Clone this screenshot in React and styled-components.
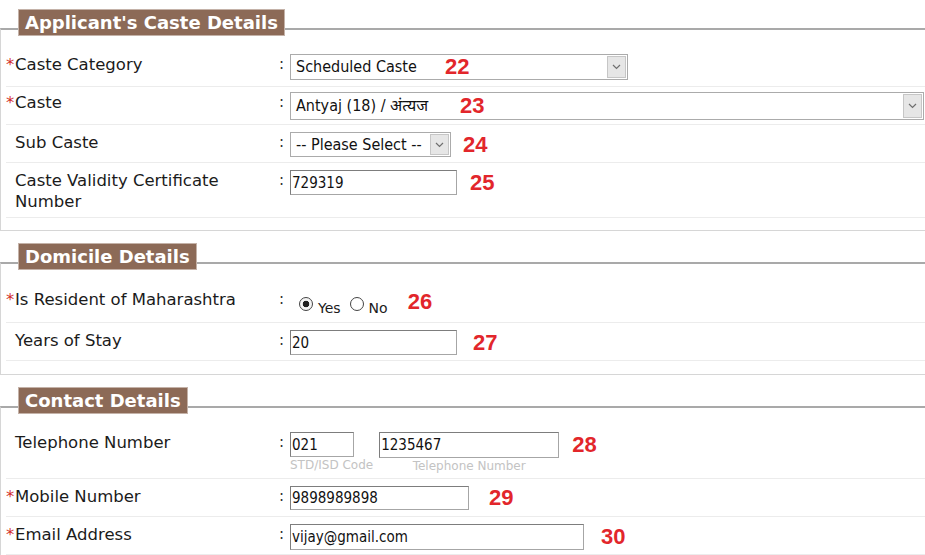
import styled, { createGlobalStyle } from "styled-components";

const GlobalStyle = createGlobalStyle`
  html, body {
    margin: 0;
    padding: 0;
    background: #fff;
  }
  body {
    font-family: "DejaVu Sans", Verdana, sans-serif;
    color: #1b1b1b;
    overflow: hidden;
  }
`;

const FIELD_FONT = `"DejaVu Sans Condensed", "Liberation Sans", "Noto Sans Devanagari", "Lohit Devanagari", "FreeSans", sans-serif`;

function Select({ width, height, value }) {
  return (
    <SelectBox $w={width} $h={height}>
      <SelectText $h={height}>{value}</SelectText>
      <Arrow>
        <svg width="9" height="6" viewBox="0 0 9 6">
          <path d="M1 1 L4.5 4.5 L8 1" fill="none" stroke="#6f6f6f" strokeWidth="1.2" />
        </svg>
      </Arrow>
    </SelectBox>
  );
}

function Radio({ checked, label }) {
  return (
    <RadioOption>
      <Dot $checked={checked} />
      <RadioText>{label}</RadioText>
    </RadioOption>
  );
}

function FieldRow({ label, req, h, pt, align, children }) {
  return (
    <Row $h={h} $pt={pt}>
      <Label>
        <Mark>{req ? "*" : ""}</Mark>
        <span>{label}</span>
      </Label>
      <Colon>:</Colon>
      <Value $align={align}>{children}</Value>
    </Row>
  );
}

export default function App() {
  return (
    <Page>
      <GlobalStyle />

      <Section $pb={12}>
        <Legend>Applicant's Caste Details</Legend>
        <Rows>
          <FieldRow req label="Caste Category" h={38} pt={5}>
            <Overlay>
              <Select width={338} height={26} value="Scheduled Caste" />
              <Tag $float $left={155}>22</Tag>
            </Overlay>
          </FieldRow>
          <FieldRow req label="Caste" h={38} pt={5}>
            <Overlay>
              <Select width={634} height={28} value="Antyaj (18) / अंत्यज" />
              <Tag $float $left={170}>23</Tag>
            </Overlay>
          </FieldRow>
          <FieldRow label="Sub Caste" h={38} pt={7}>
            <Select width={161} height={25} value="-- Please Select --" />
            <Tag $gap={12}>24</Tag>
          </FieldRow>
          <FieldRow label="Caste Validity Certificate Number" h={55} pt={7}>
            <Input $w={167} $h={25} defaultValue="729319" />
            <Tag $gap={13}>25</Tag>
          </FieldRow>
        </Rows>
      </Section>

      <Section $pb={13}>
        <Legend>Domicile Details</Legend>
        <Rows>
          <FieldRow req label="Is Resident of Maharashtra" h={40} pt={6}>
            <RadioGroup>
              <Radio checked label="Yes" />
              <Radio label="No" />
            </RadioGroup>
            <Tag $gap={20}>26</Tag>
          </FieldRow>
          <FieldRow label="Years of Stay" h={38} pt={7}>
            <Input $w={167} $h={25} defaultValue="20" />
            <Tag $gap={16}>27</Tag>
          </FieldRow>
        </Rows>
      </Section>

      <Section $pb={13}>
        <Legend>Contact Details</Legend>
        <Rows>
          <FieldRow label="Telephone Number" h={52} pt={5} align="flex-start">
            <PhoneGroup>
              <Field $align="flex-start">
                <Input $w={64} $h={25} defaultValue="021" />
                <Hint>STD/ISD Code</Hint>
              </Field>
              <Field $align="center">
                <Input $w={180} $h={26} defaultValue="1235467" />
                <Hint>Telephone Number</Hint>
              </Field>
            </PhoneGroup>
            <Tag $gap={13} $top={2}>28</Tag>
          </FieldRow>
          <FieldRow req label="Mobile Number" h={38} pt={7}>
            <Input $w={179} $h={24} defaultValue="9898989898" />
            <Tag $gap={20}>29</Tag>
          </FieldRow>
          <FieldRow req label="Email Address" h={38} pt={7}>
            <Input $w={294} $h={26} defaultValue="vijay@gmail.com" />
            <Tag $gap={17}>30</Tag>
          </FieldRow>
        </Rows>
      </Section>
    </Page>
  );
}

const Page = styled.div`
  width: 925px;
  padding-top: 28px;
`;

const Section = styled.section`
  display: flex;
  flex-direction: column;
  margin: 0 -20px 31px 0;
  padding: 0 0 ${(p) => p.$pb}px 0;
  border-top: 2px solid #a9a9a9;
  border-left: 1px solid #d6d6d6;
  border-bottom: 1px solid #d6d6d6;
`;

const Legend = styled.h2`
  align-self: flex-start;
  box-sizing: border-box;
  height: 27px;
  margin: -21px 0 13px 17px;
  padding: 0 6px;
  background: #8c6a57;
  border: 1px solid #c4b2a8;
  color: #fff;
  font-family: "DejaVu Sans", Verdana, sans-serif;
  font-size: 18px;
  font-weight: bold;
  line-height: 25px;
  white-space: nowrap;
`;

const Rows = styled.div`
  display: flex;
  flex-direction: column;
  padding-left: 5px;
`;

const Row = styled.div`
  display: grid;
  grid-template-columns: 270px 14px 1fr;
  box-sizing: border-box;
  height: ${(p) => p.$h}px;
  padding-top: ${(p) => p.$pt}px;
  border-bottom: 1px solid #ececec;
`;

const Label = styled.div`
  display: flex;
  align-self: start;
  font-size: 16.5px;
  line-height: 21px;
  color: #1b1b1b;
`;

const Mark = styled.span`
  flex: 0 0 9px;
  color: #d22b2b;
`;

const Colon = styled.div`
  align-self: start;
  font-size: 15px;
  line-height: 21px;
  padding-left: 3px;
  color: #333;
`;

const Value = styled.div`
  display: flex;
  align-self: start;
  align-items: ${(p) => p.$align || "center"};
`;

const Overlay = styled.div`
  position: relative;
`;

const SelectBox = styled.div`
  display: flex;
  box-sizing: border-box;
  width: ${(p) => p.$w}px;
  height: ${(p) => p.$h}px;
  border: 1px solid #ababab;
  background: #fff;
`;

const SelectText = styled.div`
  flex: 1;
  padding-left: 5px;
  font-family: ${FIELD_FONT};
  font-size: 16px;
  line-height: ${(p) => p.$h - 2}px;
  color: #111;
  white-space: nowrap;
  overflow: hidden;
`;

const Arrow = styled.div`
  display: flex;
  align-items: center;
  justify-content: center;
  box-sizing: border-box;
  width: 19px;
  margin: 1px;
  background: #e6e6e6;
  border: 1px solid #c6c6c6;
`;

const Input = styled.input`
  box-sizing: border-box;
  width: ${(p) => p.$w}px;
  height: ${(p) => p.$h}px;
  margin: 0;
  padding: 0 1px;
  border: 1px solid #a6a6a6;
  border-top-color: #7d7d7d;
  border-left-color: #7d7d7d;
  background: #fff;
  font-family: ${FIELD_FONT};
  font-size: 15px;
  color: #111;
  outline: none;
`;

const Tag = styled.span`
  font-family: "Liberation Sans", Arial, sans-serif;
  font-size: 22px;
  font-weight: bold;
  line-height: 22px;
  color: #e2262b;
  margin-left: ${(p) => p.$gap || 0}px;
  margin-top: ${(p) => p.$top || 0}px;
  ${(p) =>
    p.$float &&
    `
    position: absolute;
    top: 50%;
    left: ${p.$left}px;
    margin-top: -11px;
  `}
`;

const RadioGroup = styled.div`
  display: flex;
  gap: 9px;
  margin: 8px 0 0 9px;
`;

const RadioOption = styled.label`
  display: flex;
  align-items: flex-start;
  gap: 5px;
`;

const Dot = styled.span`
  box-sizing: border-box;
  width: 14px;
  height: 14px;
  border-radius: 50%;
  border: 1px solid #444;
  background: ${(p) =>
    p.$checked
      ? "radial-gradient(circle, #1e1e1e 0 3px, #f4f4f4 3.6px)"
      : "#fff"};
`;

const RadioText = styled.span`
  padding-top: 4px;
  font-size: 14px;
  line-height: 14px;
  color: #1b1b1b;
`;

const PhoneGroup = styled.div`
  display: flex;
  gap: 6px;
`;

const Field = styled.div`
  display: flex;
  flex-direction: column;
  align-items: ${(p) => p.$align};
`;

const Hint = styled.span`
  margin-top: 2px;
  font-size: 12px;
  line-height: 13px;
  color: #c3c3c3;
  white-space: nowrap;
`;
